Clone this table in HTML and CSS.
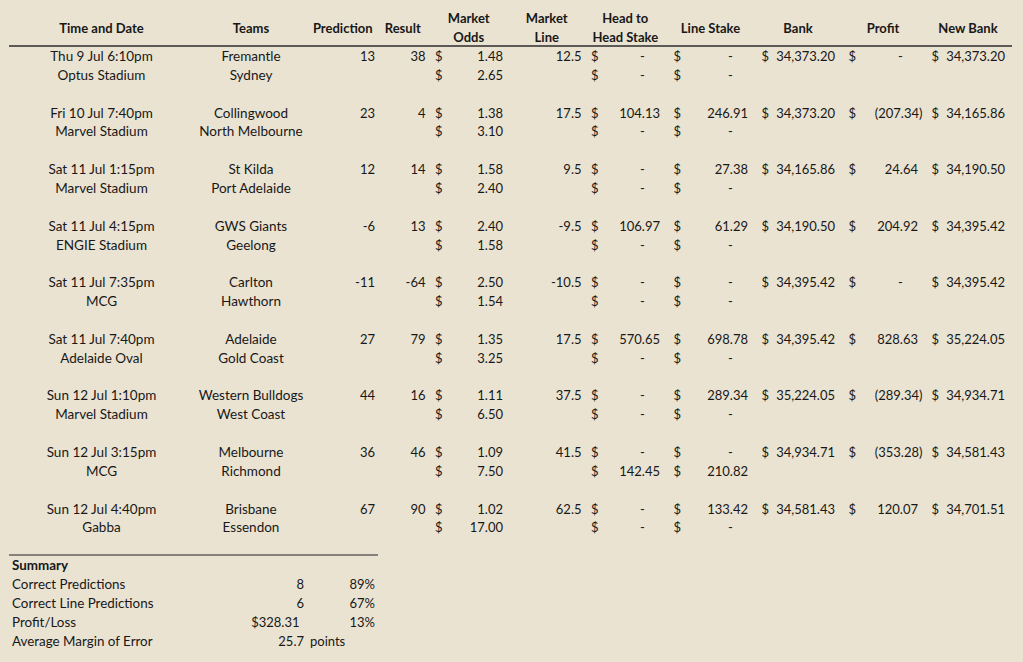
FILE: index.html
```html
<!DOCTYPE html>
<html lang="en">
<head>
<meta charset="utf-8">
<title>Round Results</title>
<link rel="stylesheet" href="styles.css">
</head>
<body>
<div class="sheet">
  <div class="head">
    <div class="h">Time and Date</div>
    <div class="h">Teams</div>
    <div class="h">Prediction</div>
    <div class="h">Result</div>
    <div class="h"><span>Market</span><span>Odds</span></div>
    <div class="h"><span>Market</span><span>Line</span></div>
    <div class="h"><span>Head to</span><span>Head Stake</span></div>
    <div class="h">Line Stake</div>
    <div class="h">Bank</div>
    <div class="h">Profit</div>
    <div class="h">New Bank</div>
  </div>

  <div class="game">
    <div class="row">
      <div class="c">Thu 9 Jul 6:10pm</div><div class="c">Fremantle</div>
      <div class="n">13</div><div class="n">38</div>
      <div class="acc"><span>$</span><span>1.48</span></div>
      <div class="n">12.5</div>
      <div class="acc"><span>$</span><span class="z">-</span></div>
      <div class="acc"><span>$</span><span class="z">-</span></div>
      <div class="acc"><span>$</span><span>34,373.20</span></div>
      <div class="acc"><span>$</span><span class="z">-</span></div>
      <div class="acc"><span>$</span><span>34,373.20</span></div>
    </div>
    <div class="row">
      <div class="c">Optus Stadium</div><div class="c">Sydney</div>
      <div></div><div></div>
      <div class="acc"><span>$</span><span>2.65</span></div>
      <div></div>
      <div class="acc"><span>$</span><span class="z">-</span></div>
      <div class="acc"><span>$</span><span class="z">-</span></div>
    </div>
  </div>

  <div class="game">
    <div class="row">
      <div class="c">Fri 10 Jul 7:40pm</div><div class="c">Collingwood</div>
      <div class="n">23</div><div class="n">4</div>
      <div class="acc"><span>$</span><span>1.38</span></div>
      <div class="n">17.5</div>
      <div class="acc"><span>$</span><span>104.13</span></div>
      <div class="acc"><span>$</span><span>246.91</span></div>
      <div class="acc"><span>$</span><span>34,373.20</span></div>
      <div class="acc"><span>$</span><span class="neg">(207.34)</span></div>
      <div class="acc"><span>$</span><span>34,165.86</span></div>
    </div>
    <div class="row">
      <div class="c">Marvel Stadium</div><div class="c">North Melbourne</div>
      <div></div><div></div>
      <div class="acc"><span>$</span><span>3.10</span></div>
      <div></div>
      <div class="acc"><span>$</span><span class="z">-</span></div>
      <div class="acc"><span>$</span><span class="z">-</span></div>
    </div>
  </div>

  <div class="game">
    <div class="row">
      <div class="c">Sat 11 Jul 1:15pm</div><div class="c">St Kilda</div>
      <div class="n">12</div><div class="n">14</div>
      <div class="acc"><span>$</span><span>1.58</span></div>
      <div class="n">9.5</div>
      <div class="acc"><span>$</span><span class="z">-</span></div>
      <div class="acc"><span>$</span><span>27.38</span></div>
      <div class="acc"><span>$</span><span>34,165.86</span></div>
      <div class="acc"><span>$</span><span>24.64</span></div>
      <div class="acc"><span>$</span><span>34,190.50</span></div>
    </div>
    <div class="row">
      <div class="c">Marvel Stadium</div><div class="c">Port Adelaide</div>
      <div></div><div></div>
      <div class="acc"><span>$</span><span>2.40</span></div>
      <div></div>
      <div class="acc"><span>$</span><span class="z">-</span></div>
      <div class="acc"><span>$</span><span class="z">-</span></div>
    </div>
  </div>

  <div class="game">
    <div class="row">
      <div class="c">Sat 11 Jul 4:15pm</div><div class="c">GWS Giants</div>
      <div class="n">-6</div><div class="n">13</div>
      <div class="acc"><span>$</span><span>2.40</span></div>
      <div class="n">-9.5</div>
      <div class="acc"><span>$</span><span>106.97</span></div>
      <div class="acc"><span>$</span><span>61.29</span></div>
      <div class="acc"><span>$</span><span>34,190.50</span></div>
      <div class="acc"><span>$</span><span>204.92</span></div>
      <div class="acc"><span>$</span><span>34,395.42</span></div>
    </div>
    <div class="row">
      <div class="c">ENGIE Stadium</div><div class="c">Geelong</div>
      <div></div><div></div>
      <div class="acc"><span>$</span><span>1.58</span></div>
      <div></div>
      <div class="acc"><span>$</span><span class="z">-</span></div>
      <div class="acc"><span>$</span><span class="z">-</span></div>
    </div>
  </div>

  <div class="game">
    <div class="row">
      <div class="c">Sat 11 Jul 7:35pm</div><div class="c">Carlton</div>
      <div class="n">-11</div><div class="n">-64</div>
      <div class="acc"><span>$</span><span>2.50</span></div>
      <div class="n">-10.5</div>
      <div class="acc"><span>$</span><span class="z">-</span></div>
      <div class="acc"><span>$</span><span class="z">-</span></div>
      <div class="acc"><span>$</span><span>34,395.42</span></div>
      <div class="acc"><span>$</span><span class="z">-</span></div>
      <div class="acc"><span>$</span><span>34,395.42</span></div>
    </div>
    <div class="row">
      <div class="c">MCG</div><div class="c">Hawthorn</div>
      <div></div><div></div>
      <div class="acc"><span>$</span><span>1.54</span></div>
      <div></div>
      <div class="acc"><span>$</span><span class="z">-</span></div>
      <div class="acc"><span>$</span><span class="z">-</span></div>
    </div>
  </div>

  <div class="game">
    <div class="row">
      <div class="c">Sat 11 Jul 7:40pm</div><div class="c">Adelaide</div>
      <div class="n">27</div><div class="n">79</div>
      <div class="acc"><span>$</span><span>1.35</span></div>
      <div class="n">17.5</div>
      <div class="acc"><span>$</span><span>570.65</span></div>
      <div class="acc"><span>$</span><span>698.78</span></div>
      <div class="acc"><span>$</span><span>34,395.42</span></div>
      <div class="acc"><span>$</span><span>828.63</span></div>
      <div class="acc"><span>$</span><span>35,224.05</span></div>
    </div>
    <div class="row">
      <div class="c">Adelaide Oval</div><div class="c">Gold Coast</div>
      <div></div><div></div>
      <div class="acc"><span>$</span><span>3.25</span></div>
      <div></div>
      <div class="acc"><span>$</span><span class="z">-</span></div>
      <div class="acc"><span>$</span><span class="z">-</span></div>
    </div>
  </div>

  <div class="game">
    <div class="row">
      <div class="c">Sun 12 Jul 1:10pm</div><div class="c">Western Bulldogs</div>
      <div class="n">44</div><div class="n">16</div>
      <div class="acc"><span>$</span><span>1.11</span></div>
      <div class="n">37.5</div>
      <div class="acc"><span>$</span><span class="z">-</span></div>
      <div class="acc"><span>$</span><span>289.34</span></div>
      <div class="acc"><span>$</span><span>35,224.05</span></div>
      <div class="acc"><span>$</span><span class="neg">(289.34)</span></div>
      <div class="acc"><span>$</span><span>34,934.71</span></div>
    </div>
    <div class="row">
      <div class="c">Marvel Stadium</div><div class="c">West Coast</div>
      <div></div><div></div>
      <div class="acc"><span>$</span><span>6.50</span></div>
      <div></div>
      <div class="acc"><span>$</span><span class="z">-</span></div>
      <div class="acc"><span>$</span><span class="z">-</span></div>
    </div>
  </div>

  <div class="game">
    <div class="row">
      <div class="c">Sun 12 Jul 3:15pm</div><div class="c">Melbourne</div>
      <div class="n">36</div><div class="n">46</div>
      <div class="acc"><span>$</span><span>1.09</span></div>
      <div class="n">41.5</div>
      <div class="acc"><span>$</span><span class="z">-</span></div>
      <div class="acc"><span>$</span><span class="z">-</span></div>
      <div class="acc"><span>$</span><span>34,934.71</span></div>
      <div class="acc"><span>$</span><span class="neg">(353.28)</span></div>
      <div class="acc"><span>$</span><span>34,581.43</span></div>
    </div>
    <div class="row">
      <div class="c">MCG</div><div class="c">Richmond</div>
      <div></div><div></div>
      <div class="acc"><span>$</span><span>7.50</span></div>
      <div></div>
      <div class="acc"><span>$</span><span>142.45</span></div>
      <div class="acc"><span>$</span><span>210.82</span></div>
    </div>
  </div>

  <div class="game">
    <div class="row">
      <div class="c">Sun 12 Jul 4:40pm</div><div class="c">Brisbane</div>
      <div class="n">67</div><div class="n">90</div>
      <div class="acc"><span>$</span><span>1.02</span></div>
      <div class="n">62.5</div>
      <div class="acc"><span>$</span><span class="z">-</span></div>
      <div class="acc"><span>$</span><span>133.42</span></div>
      <div class="acc"><span>$</span><span>34,581.43</span></div>
      <div class="acc"><span>$</span><span>120.07</span></div>
      <div class="acc"><span>$</span><span>34,701.51</span></div>
    </div>
    <div class="row">
      <div class="c">Gabba</div><div class="c">Essendon</div>
      <div></div><div></div>
      <div class="acc"><span>$</span><span>17.00</span></div>
      <div></div>
      <div class="acc"><span>$</span><span class="z">-</span></div>
      <div class="acc"><span>$</span><span class="z">-</span></div>
    </div>
  </div>

  <div class="summary">
    <div class="l b">Summary</div><div></div><div></div>
    <div class="l">Correct Predictions</div><div class="sv">8</div><div class="n">89%</div>
    <div class="l">Correct Line Predictions</div><div class="sv">6</div><div class="n">67%</div>
    <div class="l">Profit/Loss</div><div class="sv"><span class="pl">$328.31</span></div><div class="n">13%</div>
    <div class="l">Average Margin of Error</div><div class="sv">25.7</div><div class="pts">points</div>
  </div>
</div>
</body>
</html>
```

FILE: styles.css
```css
html, body {
  margin: 0;
  padding: 0;
  background: #eae3d2;
}

body {
  font-family: "Lato", "Liberation Sans", sans-serif;
  font-size: 13px;
  color: #181818;
}

.sheet {
  --row: 18.87px;
  --cols: 185px 114px 69.5px 50.5px 81.5px 74.5px 82.5px 88px 87px 83px 87px;
  padding-left: 9px;
  width: 1002.5px;
}

.head {
  display: grid;
  grid-template-columns: var(--cols);
  height: 36px;
  padding-top: 9px;
  border-bottom: 2px solid #5c5a56;
}

.h {
  height: 38px;
  display: flex;
  flex-direction: column;
  align-items: center;
  justify-content: center;
  font-weight: 700;
  line-height: 19px;
  white-space: nowrap;
}

.game {
  padding-bottom: var(--row);
}

.row {
  display: grid;
  grid-template-columns: var(--cols);
  height: var(--row);
  line-height: var(--row);
  white-space: nowrap;
}

.c {
  display: flex;
  justify-content: center;
  font-size: 13.5px;
}

.n {
  text-align: right;
  padding-right: 2.5px;
}

.acc {
  display: flex;
  justify-content: space-between;
  padding: 0 6.5px 0 7px;
}

.acc .neg {
  margin-right: -4.5px;
}

.acc .z {
  margin-right: 2ch;
}

.summary {
  display: grid;
  grid-template-columns: 185px 114px 69.5px;
  grid-auto-rows: var(--row);
  line-height: var(--row);
  width: 368.5px;
  margin-top: -2px;
  border-top: 2px solid #86827b;
  white-space: nowrap;
}

.summary .l {
  padding-left: 3px;
  font-size: 13.4px;
}

.summary .b {
  font-weight: 700;
}

.summary .sv {
  text-align: right;
  padding-right: 4px;
}

.summary .pl {
  margin-right: 4.5px;
}

.summary .pts {
  padding-left: 2px;
}
```
